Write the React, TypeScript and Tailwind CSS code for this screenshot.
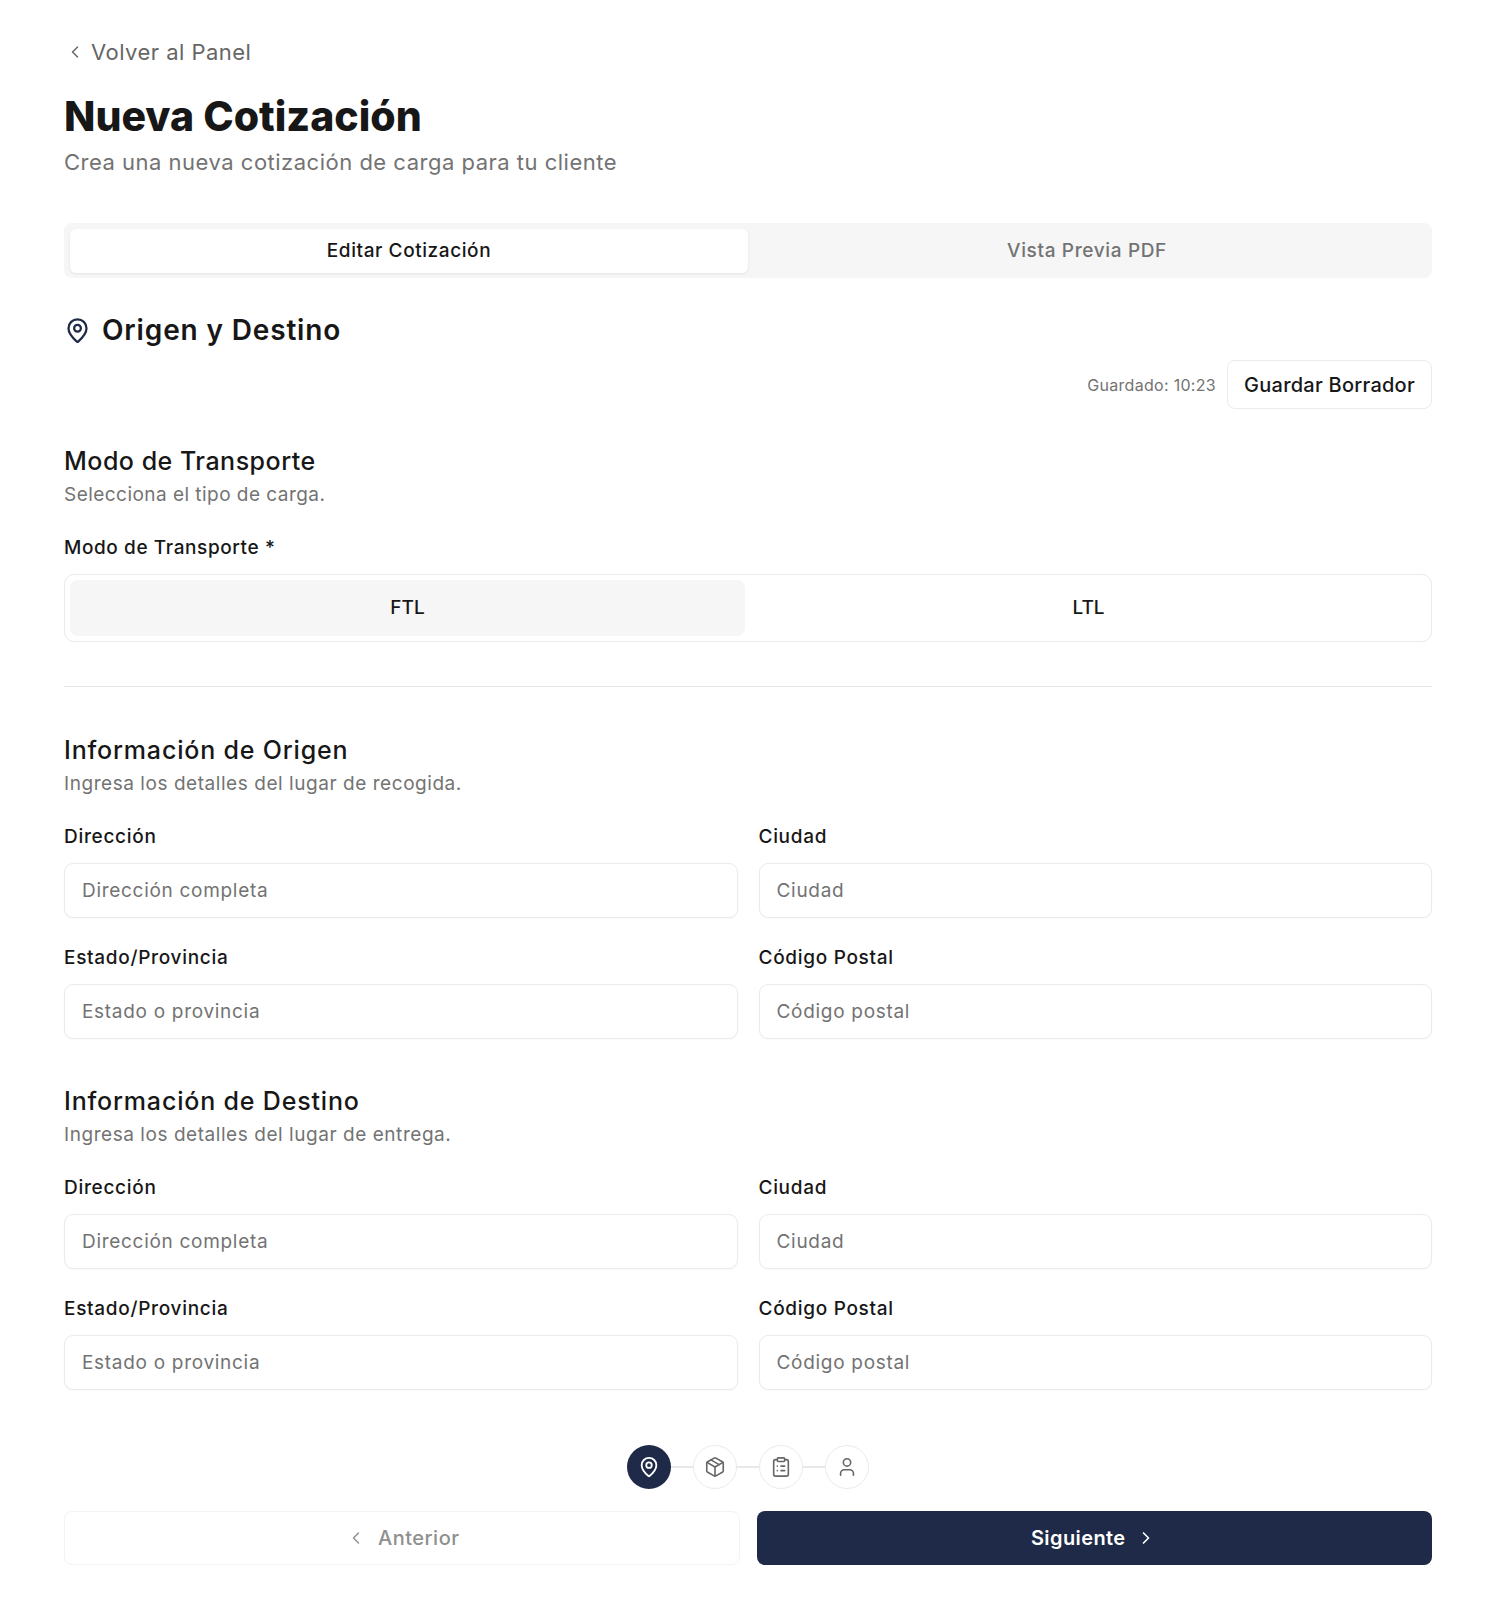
import React from "react";
import { ChevronLeft, ChevronRight, MapPin, Package, ClipboardList, User } from "lucide-react";

function Field({ label, placeholder }: { label: string; placeholder: string }) {
  return (
    <div className="flex flex-col">
      <label className="h-[20px] text-[19px] leading-[20px] font-[450] tracking-[0.7px] text-[#171717]">{label}</label>
      <input
        readOnly
        placeholder={placeholder}
        className="mt-[16px] h-[55px] w-full rounded-[9px] border border-[#ebebeb] bg-white px-[17px] text-[19px] tracking-[0.7px] text-[#171717] placeholder:text-[#737373] shadow-[0_1px_2px_rgba(0,0,0,0.03)] outline-none"
      />
    </div>
  );
}

function Section({ title, desc }: { title: string; desc: string }) {
  return (
    <section>
      <h3 className="h-[30px] text-[25px] leading-[30px] font-medium tracking-[0.82px] text-[#171717]">{title}</h3>
      <p className="mt-[7px] h-[24px] text-[19px] leading-[24px] tracking-[0.55px] text-[#737373]">{desc}</p>
      <div className="mt-[31px] grid grid-cols-2 gap-x-[21px] gap-y-[30px]">
        <Field label="Dirección" placeholder="Dirección completa" />
        <Field label="Ciudad" placeholder="Ciudad" />
        <Field label="Estado/Provincia" placeholder="Estado o provincia" />
        <Field label="Código Postal" placeholder="Código postal" />
      </div>
    </section>
  );
}

function Step({ active, children }: { active?: boolean; children: React.ReactNode }) {
  return (
    <div
      className={
        active
          ? "flex h-[44px] w-[44px] items-center justify-center rounded-full bg-[#1e2a47] text-white"
          : "flex h-[44px] w-[44px] items-center justify-center rounded-full border border-[#ebebeb] bg-white text-[#666666]"
      }
    >
      {children}
    </div>
  );
}

export default function App() {
  return (
    <div className="min-h-[1600px] bg-white pl-[64px] pr-[62px] pt-[39px] font-['Inter','Liberation_Sans',sans-serif] text-[#171717]">
      <a className="flex h-[26px] items-center gap-[6px] pl-[1px] text-[22px] tracking-[0.47px] text-[#666666]">
        <ChevronLeft size={20} strokeWidth={1.75} />
        <span>Volver al Panel</span>
      </a>
      <h1 className="mt-[28px] h-[46px] text-[41px] leading-[46px] font-extrabold text-[#171717]">Nueva Cotización</h1>
      <p className="mt-[8px] h-[30px] text-[22px] leading-[30px] tracking-[0.5px] text-[#737373]">Crea una nueva cotización de carga para tu cliente</p>

      <div className="mt-[46px] grid h-[55px] grid-cols-2 rounded-[8px] bg-[#f6f6f6] p-[6px] pb-[5px]">
        <div className="flex items-center justify-center rounded-[6px] bg-white text-[19px] font-medium tracking-[0.58px] text-[#171717] shadow-[0_1px_3px_rgba(0,0,0,0.08)]">Editar Cotización</div>
        <div className="flex items-center justify-center text-[19px] font-medium tracking-[0.65px] text-[#737373]">Vista Previa PDF</div>
      </div>

      <div className="mt-[34px] flex h-[36px] items-center gap-[11px]">
        <MapPin size={27} strokeWidth={2} className="text-[#1e2a47]" />
        <h2 className="text-[28px] leading-[36px] font-semibold tracking-[0.85px] text-[#171717]">Origen y Destino</h2>
      </div>

      <div className="mt-[12px] flex items-center justify-end gap-[11px]">
        <span className="text-[16px] tracking-[0.3px] text-[#737373]">Guardado: 10:23</span>
        <button className="h-[49px] w-[205px] rounded-[8px] border border-[#ebebeb] bg-white text-[20px] font-medium tracking-[0.25px] text-[#171717]">Guardar Borrador</button>
      </div>

      <section className="mt-[37px]">
        <h3 className="h-[30px] text-[25px] leading-[30px] font-medium tracking-[0.5px] text-[#171717]">Modo de Transporte</h3>
        <p className="mt-[7px] h-[24px] text-[19px] leading-[24px] tracking-[0.46px] text-[#737373]">Selecciona el tipo de carga.</p>
        <label className="mt-[31px] block h-[20px] text-[19px] leading-[20px] font-[450] tracking-[0.6px] text-[#171717]">Modo de Transporte *</label>
        <div className="mt-[16px] grid h-[68px] grid-cols-2 gap-[6px] rounded-[10px] border border-[#ebebeb] bg-white p-[5px]">
          <div className="flex items-center justify-center rounded-[8px] bg-[#f6f6f6] text-[19px] font-medium text-[#171717]">FTL</div>
          <div className="flex items-center justify-center text-[19px] font-medium text-[#171717]">LTL</div>
        </div>
      </section>

      <hr className="mt-[44px] border-t border-[#e8e8e8]" />

      <div className="mt-[48px]">
        <Section title="Información de Origen" desc="Ingresa los detalles del lugar de recogida." />
      </div>
      <div className="mt-[47px]">
        <Section title="Información de Destino" desc="Ingresa los detalles del lugar de entrega." />
      </div>

      <div className="mt-[55px] flex items-center justify-center">
        <Step active><MapPin size={22} strokeWidth={2} /></Step>
        <div className="h-[2px] w-[22px] bg-[#e8e8e8]" />
        <Step><Package size={22} strokeWidth={1.75} /></Step>
        <div className="h-[2px] w-[22px] bg-[#e8e8e8]" />
        <Step><ClipboardList size={22} strokeWidth={1.75} /></Step>
        <div className="h-[2px] w-[22px] bg-[#e8e8e8]" />
        <Step><User size={22} strokeWidth={1.75} /></Step>
      </div>

      <div className="mt-[22px] grid grid-cols-2 gap-[17px]">
        <button className="flex h-[54px] items-center justify-center gap-[12px] rounded-[8px] border border-[#f3f3f3] bg-white pl-[2px] text-[20px] font-medium tracking-[0.5px] text-[#8f8f8f]">
          <ChevronLeft size={20} strokeWidth={1.75} />
          Anterior
        </button>
        <button className="flex h-[54px] items-center justify-center gap-[10px] rounded-[8px] bg-[#1e2a47] pr-[2px] text-[20px] font-semibold tracking-[0.4px] text-white">
          Siguiente
          <ChevronRight size={20} strokeWidth={2} />
        </button>
      </div>
    </div>
  );
}
